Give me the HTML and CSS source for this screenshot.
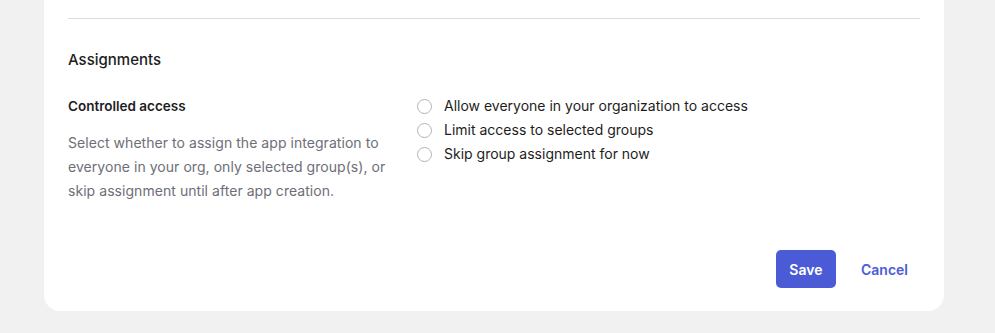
FILE: index.html
```html
<!DOCTYPE html>
<html lang="en">
<head>
<meta charset="utf-8">
<title>Assignments</title>
<link rel="stylesheet" href="styles.css">
</head>
<body>
<div class="card">
  <div class="divider"></div>
  <section class="section">
    <h2 class="section-title">Assignments</h2>
    <div class="field-row">
      <div class="field-info">
        <div class="field-label">Controlled access</div>
        <p class="field-desc">Select whether to assign the app integration to everyone in your org, only selected group(s), or skip assignment until after app creation.</p>
      </div>
      <div class="radio-group">
        <label class="radio"><span class="radio-dot"></span><span>Allow everyone in your organization to access</span></label>
        <label class="radio"><span class="radio-dot"></span><span>Limit access to selected groups</span></label>
        <label class="radio"><span class="radio-dot"></span><span>Skip group assignment for now</span></label>
      </div>
    </div>
  </section>
  <div class="actions">
    <button class="btn btn-primary">Save</button>
    <button class="btn btn-link">Cancel</button>
  </div>
</div>
</body>
</html>
```

FILE: styles.css
```css
html, body {
  margin: 0;
  padding: 0;
  background: #f1f1f1;
  font-family: Inter, "Noto Sans", sans-serif;
  color: #1d1d21;
}
.card {
  margin-left: 44px;
  width: 852px;
  background: #ffffff;
  border-radius: 0 0 16px 16px;
  padding: 18px 24px 23px 24px;
}
.divider {
  height: 1px;
  background: #dcdcdc;
}
.section {
  padding-top: 31px;
}
.section-title {
  margin: 0;
  font-size: 15px;
  line-height: 20px;
  font-weight: 500;
  color: #1d1d21;
}
.field-row {
  display: flex;
  margin-top: 24px;
}
.field-info {
  width: 349px;
}
.field-label {
  font-size: 13.5px;
  line-height: 24px;
  font-weight: 600;
  color: #1d1d21;
}
.field-desc {
  margin: 13px 0 0 0;
  font-size: 14px;
  line-height: 24px;
  color: #6e6e78;
  width: 330px;
  letter-spacing: 0.05px;
}
.radio-group {
  display: flex;
  flex-direction: column;
}
.radio {
  display: flex;
  align-items: center;
  gap: 12px;
  font-size: 14px;
  line-height: 24px;
  color: #1d1d21;
}
.radio-dot {
  width: 13px;
  height: 13px;
  border: 1.5px solid #b4b4b8;
  border-radius: 50%;
  box-sizing: content-box;
}
.actions {
  display: flex;
  justify-content: flex-end;
  gap: 13px;
  margin-top: 47px;
}
.btn {
  font-family: Inter, "Noto Sans", sans-serif;
  font-size: 14px;
  font-weight: 600;
  height: 38px;
  border: none;
  border-radius: 5px;
  padding: 0 13.5px;
  cursor: pointer;
}
.btn-primary {
  background: #4b5bd6;
  color: #ffffff;
}
.btn-link {
  background: transparent;
  color: #4b5bd6;
  padding: 0 12px;
}
```
